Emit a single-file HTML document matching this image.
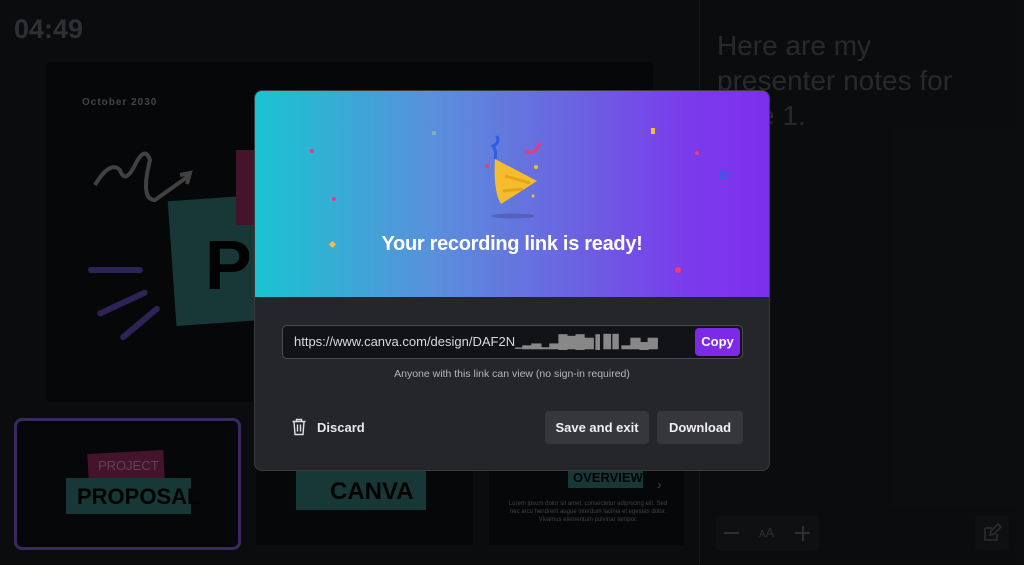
<!DOCTYPE html>
<html><head><style>
*{margin:0;padding:0;box-sizing:border-box}
body{width:1024px;height:565px;background:#15171b;position:relative;overflow:hidden;font-family:"Liberation Sans",sans-serif}
.abs{position:absolute}
</style></head><body>
<div class="abs" style="left:14px;top:14px;font-size:27px;font-weight:bold;color:#555860">04:49</div>
<div class="abs" style="left:699px;top:0;width:1px;height:565px;background:#2c2e33"></div>
<div class="abs" style="left:717px;top:28px;width:270px;font-size:28px;line-height:35px;color:#4a4c52">Here are my presenter notes for slide 1.</div>
<div class="abs" style="left:46px;top:62px;width:607px;height:340px;background:#0c0d0f;border-radius:4px"></div>
<div class="abs" style="left:82px;top:97px;font-size:10px;letter-spacing:1px;color:#7a7c80;font-weight:bold">October 2030</div>
<svg class="abs" style="left:90px;top:140px" width="120" height="80"><path d="M5 45 Q20 20 30 30 Q35 45 45 25 Q55 5 60 20 Q50 60 65 60 L100 35 M90 35 L100 33 L97 44" stroke="#777" stroke-width="4" fill="none"/></svg>
<div class="abs" style="left:172px;top:198px;width:90px;height:125px;background:#2a6664;transform:rotate(-4deg)"></div>
<div class="abs" style="left:236px;top:150px;width:20px;height:75px;background:#7a2550"></div>
<div class="abs" style="left:205px;top:225px;font-size:70px;font-weight:bold;color:#050505">P</div>
<div class="abs" style="left:88px;top:267px;width:55px;height:6px;background:#52409a;border-radius:3px"></div>
<div class="abs" style="left:95px;top:300px;width:55px;height:6px;background:#52409a;border-radius:3px;transform:rotate(-25deg)"></div>
<div class="abs" style="left:115px;top:320px;width:50px;height:6px;background:#52409a;border-radius:3px;transform:rotate(-40deg)"></div>
<div class="abs" style="left:14px;top:418px;width:227px;height:132px;border:3px solid #6a4cb0;border-radius:8px;background:#0c0d0f"></div>
<div class="abs" style="left:88px;top:452px;width:76px;height:28px;background:#7a2550;transform:rotate(-3deg)"></div>
<div class="abs" style="left:98px;top:458px;font-size:13px;color:#b07a90">PROJECT</div>
<div class="abs" style="left:66px;top:478px;width:125px;height:36px;background:#2a6664"></div>
<div class="abs" style="left:77px;top:484px;font-size:22px;font-weight:bold;color:#050505">PROPOSAL</div>
<div class="abs" style="left:256px;top:440px;width:217px;height:105px;background:#0c0d0f"></div>
<div class="abs" style="left:296px;top:470px;width:130px;height:40px;background:#2a6664"></div>
<div class="abs" style="left:330px;top:478px;font-size:24px;font-weight:bold;color:#050505">CANVA</div>
<div class="abs" style="left:489px;top:440px;width:195px;height:105px;background:#0c0d0f"></div>
<div class="abs" style="left:568px;top:466px;width:75px;height:22px;background:#2a6664"></div>
<div class="abs" style="left:573px;top:470px;font-size:13px;font-weight:bold;color:#050505">OVERVIEW</div>
<div class="abs" style="left:508px;top:500px;width:160px;font-size:6px;line-height:8px;color:#777;text-align:center">Lorem ipsum dolor sit amet, consectetur adipiscing elit. Sed nec arcu hendrerit augue interdum lacinia et egestas dolor. Vivamus elementum pulvinar tempor.</div>
<div class="abs" style="left:657px;top:476px;color:#777;font-size:14px">›</div>
<div class="abs" style="left:716px;top:516px;width:103px;height:35px;background:#1c1e22;border-radius:4px"></div>
<div class="abs" style="left:724px;top:532px;width:15px;height:2px;background:#55575c"></div>
<div class="abs" style="left:759px;top:525px;font-size:13px;color:#55575c">ᴀA</div>
<div class="abs" style="left:795px;top:532px;width:15px;height:2px;background:#55575c"></div>
<div class="abs" style="left:801.5px;top:526px;width:2px;height:15px;background:#55575c"></div>
<div class="abs" style="left:975px;top:516px;width:34px;height:34px;background:#1c1e22;border-radius:4px"></div>
<svg class="abs" style="left:982px;top:523px" width="20" height="20"><path d="M3 5h7M3 5v12h12v-6M8 12l1-4 7-7 3 3-7 7z" stroke="#55575c" stroke-width="1.5" fill="none"/></svg>
<div class="abs" style="left:0;top:0;width:1024px;height:565px;background:rgba(0,0,0,0.45)"></div>
<div class="abs" style="left:254px;top:90px;width:516px;height:381px;background:#252629;border-radius:8px;overflow:hidden;border:1px solid #3a3b3f">
 <div style="height:206px;background:linear-gradient(90deg,#19c4d0 0%,#5a8fdc 35%,#6a66e0 60%,#7b3aec 85%,#7c2fec 100%);position:relative">
  <svg class="abs" style="left:220px;top:40px" width="70" height="90">
   <path d="M20 28 Q22 20 18 15 Q25 12 22 5" stroke="#2d5fe0" stroke-width="3" fill="none"/>
   <path d="M50 20 Q60 25 65 12" stroke="#e83a7a" stroke-width="3" fill="none"/>
   <path d="M20 28 L62 50 L26 73 Q18 60 20 28Z" fill="#f5bd2e"/>
   <path d="M30 45 L55 52 M28 60 L48 58" stroke="#e8a218" stroke-width="3"/>
   <ellipse cx="38" cy="85" rx="22" ry="2.5" fill="#4a55a8" opacity=".6"/>
   <circle cx="12" cy="35" r="2" fill="#e83a7a"/><circle cx="61" cy="36" r="2" fill="#f5bd2e"/><circle cx="58" cy="65" r="1.5" fill="#f5bd2e"/>
  </svg>
  <div style="position:absolute;left:0;right:0;top:142px;text-align:center;color:#fff;font-size:20px;font-weight:bold;letter-spacing:-0.3px">Your recording link is ready!</div>
  <div class="abs" style="left:75px;top:151px;width:5px;height:5px;background:#f5c030;transform:rotate(45deg)"></div>
  <div class="abs" style="left:420px;top:176px;width:6px;height:6px;background:#ef3a6a;border-radius:50%"></div>
  <div class="abs" style="left:55px;top:58px;width:4px;height:4px;background:#e83a7a;border-radius:50%"></div>
  <div class="abs" style="left:77px;top:106px;width:4px;height:4px;background:#e83a7a;border-radius:50%"></div>
  <div class="abs" style="left:396px;top:37px;width:4px;height:6px;background:#f5c030"></div>
  <div class="abs" style="left:440px;top:60px;width:4px;height:4px;background:#e83a7a;border-radius:50%"></div>
  <div class="abs" style="left:177px;top:40px;width:4px;height:4px;background:#8ab"></div>
  <div class="abs" style="left:465px;top:80px;width:8px;height:8px;border:2px solid #2d5fe0;border-radius:2px"></div>
 </div>
 <div class="abs" style="left:27px;top:234px;width:461px;height:34px;background:#121316;border:1px solid #4a4b50;border-radius:5px">
  <div style="position:absolute;left:11px;top:8px;font-size:13px;color:#d8d9dc;white-space:nowrap">https://www.canva.com/design/DAF2N_<span style="color:#888;letter-spacing:-1px">▂▃▁▃█▇█▆ ▌▊▋▂▆▄▆</span></div>
  <div style="position:absolute;right:2px;top:2px;width:45px;height:28px;background:#7d2ae8;border-radius:4px;color:#fff;font-size:13px;font-weight:bold;text-align:center;line-height:28px">Copy</div>
 </div>
 <div style="position:absolute;left:0;right:0;top:277px;text-align:center;font-size:10.5px;color:#b5b6ba">Anyone with this link can view (no sign-in required)</div>
 <svg class="abs" style="left:36px;top:327px" width="16" height="18"><path d="M1.5 3.5h13M5.5 3.5V1.5h5v2M3 3.5l1 13h8l1-13M6.5 6.5v7M9.5 6.5v7" stroke="#e0e0e3" stroke-width="1.4" fill="none"/></svg>
 <div class="abs" style="left:62px;top:329px;font-size:13px;font-weight:bold;color:#e8e8ea">Discard</div>
 <div class="abs" style="left:290px;top:320px;width:104px;height:33px;background:#36373b;border-radius:4px;color:#f0f0f2;font-size:13px;font-weight:bold;text-align:center;line-height:33px">Save and exit</div>
 <div class="abs" style="left:402px;top:320px;width:86px;height:33px;background:#36373b;border-radius:4px;color:#f0f0f2;font-size:13px;font-weight:bold;text-align:center;line-height:33px">Download</div>
</div>
</body></html>
